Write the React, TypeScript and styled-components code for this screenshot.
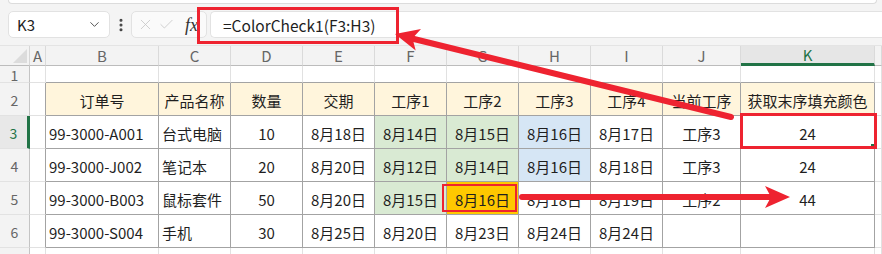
import React from "react";
import styled, { createGlobalStyle } from "styled-components";
import { ChevronDown, EllipsisVertical, X, Check } from "lucide-react";

const GRID = "#e1e1e1";
const DARK = "#a3a3a3";
const GREEN = "#217346";
const RED = "#ee2330";

const GlobalStyle = createGlobalStyle`
  html, body {
    margin: 0;
    padding: 0;
    background: #ffffff;
  }
  body {
    font-family: "Noto Sans CJK SC", "Noto Sans", sans-serif;
    color: #1f1f1f;
  }
`;

type Col = { key: string; w: number };

const COLS: Col[] = [
  { key: "A", w: 16 },
  { key: "B", w: 113 },
  { key: "C", w: 72 },
  { key: "D", w: 72 },
  { key: "E", w: 72 },
  { key: "F", w: 72 },
  { key: "G", w: 72 },
  { key: "H", w: 72 },
  { key: "I", w: 72 },
  { key: "J", w: 78 },
  { key: "K", w: 134 },
];

const FILLS: Record<string, string> = {
  F3: "#d9ead3",
  G3: "#d9ead3",
  H3: "#d6e6f5",
  F4: "#d9ead3",
  G4: "#d9ead3",
  H4: "#d6e6f5",
  F5: "#d9ead3",
  G5: "#ffc800",
};

const HEAD_FILL = "#fff5dc";

// B..K values for rows 2-6
const TABLE: Record<number, string[]> = {
  2: ["订单号", "产品名称", "数量", "交期", "工序1", "工序2", "工序3", "工序4", "当前工序", "获取末序填充颜色"],
  3: ["99-3000-A001", "台式电脑", "10", "8月18日", "8月14日", "8月15日", "8月16日", "8月17日", "工序3", "24"],
  4: ["99-3000-J002", "笔记本", "20", "8月20日", "8月12日", "8月14日", "8月16日", "8月18日", "工序3", "24"],
  5: ["99-3000-B003", "鼠标套件", "50", "8月20日", "8月15日", "8月16日", "8月18日", "8月19日", "工序2", "44"],
  6: ["99-3000-S004", "手机", "30", "8月25日", "8月20日", "8月23日", "8月24日", "8月24日", "", ""],
};

// row 7 only peeks in at the bottom edge, so no label
const ROWS = [
  { n: 1, h: 17, label: "1" },
  { n: 2, h: 33, label: "2" },
  { n: 3, h: 33, label: "3" },
  { n: 4, h: 33, label: "4" },
  { n: 5, h: 33, label: "5" },
  { n: 6, h: 33, label: "6" },
  { n: 7, h: 20, label: "" },
];

const App: React.FC = () => {
  const renderCell = (row: number, col: Col, i: number) => {
    const id = col.key + row;
    const inTable = row >= 2 && row <= 6 && i >= 1;
    const value = inTable ? TABLE[row][i - 1] : "";
    const fill = row === 2 && inTable ? HEAD_FILL : FILLS[id];
    const left = inTable && row > 2 && (col.key === "B" || col.key === "C");
    return (
      <Cell
        key={id}
        $w={col.w}
        $fill={fill}
        $left={left}
        $rightDark={inTable || (col.key === "A" && row >= 2 && row <= 6)}
        $bottomDark={inTable || (row === 1 && i >= 1)}
        $selected={id === "K3"}
      >
        {value}
      </Cell>
    );
  };

  return (
    <Page>
      <GlobalStyle />
      <TopStrip />
      <FormulaBar>
        <NameBox>
          <span>K3</span>
          <ChevronDown size={15} strokeWidth={1.6} color="#555" />
        </NameBox>
        <MoreButton>
          <EllipsisVertical size={16} strokeWidth={2.6} color="#444" />
        </MoreButton>
        <EditBox>
          <X size={17} strokeWidth={1.1} color="#c4c4c4" />
          <Check size={17} strokeWidth={1.1} color="#c4c4c4" />
          <Fx>fx</Fx>
        </EditBox>
        <FormulaInput>=ColorCheck1(F3:H3)</FormulaInput>
      </FormulaBar>

      <Sheet>
        <HeaderRow>
          <Corner />
          {COLS.map((c) => (
            <ColHeader key={c.key} $w={c.w} $active={c.key === "K"}>
              {c.key}
            </ColHeader>
          ))}
          <ColHeader $w={0} $fillRest />
        </HeaderRow>
        {ROWS.map((r) => (
          <Row key={r.n} $h={r.h}>
            <RowHeader $active={r.n === 3}>{r.label}</RowHeader>
            {COLS.map((c, i) => renderCell(r.n, c, i))}
            <Cell $w={0} $fillRest />
          </Row>
        ))}
      </Sheet>

      <Mark $x={197} $y={7} $w={202} $h={37} $b={3} />
      <Mark $x={740} $y={113} $w={137} $h={36} $b={3} />
      <Mark $x={442} $y={184} $w={75} $h={28} $b={2} />

      <Arrows width={882} height={254} viewBox="0 0 882 254">
        <line x1={731} y1={117} x2={414} y2={39} stroke={RED} strokeWidth={6} strokeLinecap="round" />
        <polygon points="395,34 421,29 412.5,38.3 415.7,50.5" fill={RED} />
        <line x1={522} y1={197} x2={772} y2={197} stroke={RED} strokeWidth={6} strokeLinecap="round" />
        <polygon points="790,197 765,186 771,197 765,208" fill={RED} />
      </Arrows>
    </Page>
  );
};

const Page = styled.div`
  position: relative;
  width: 882px;
  height: 254px;
  overflow: hidden;
  background: #f4f4f4;
`;

const TopStrip = styled.div`
  height: 3px;
  margin: 0 5px 0 8px;
  background: #ffffff;
  border: 1px solid #dcdcdc;
  border-top: none;
  border-radius: 0 0 5px 5px;
`;

const FormulaBar = styled.div`
  display: flex;
  align-items: center;
  height: 41px;
  padding: 0 0 0 8px;
  box-sizing: border-box;
`;

const NameBox = styled.div`
  box-sizing: border-box;
  width: 102px;
  height: 27px;
  display: flex;
  align-items: center;
  justify-content: space-between;
  padding: 0 7px 0 8px;
  background: #ffffff;
  border: 1px solid #e2e2e2;
  border-radius: 5px;
  font-size: 15px;
  color: #222;
`;

const MoreButton = styled.div`
  width: 20px;
  display: flex;
  justify-content: center;
  margin-left: 1px;
`;

const EditBox = styled.div`
  box-sizing: border-box;
  width: 76px;
  height: 27px;
  display: flex;
  align-items: center;
  gap: 4px;
  padding-left: 5px;
  background: #fafafa;
  border: 1px solid #e2e2e2;
  border-radius: 5px;
  svg {
    flex: none;
  }
`;

const Fx = styled.span`
  margin-left: 6px;
  font-family: "Liberation Serif", serif;
  font-style: italic;
  font-size: 18px;
  color: #333;
  line-height: 1;
`;

const FormulaInput = styled.div`
  box-sizing: border-box;
  flex: 1;
  height: 27px;
  margin-left: 3px;
  display: flex;
  align-items: center;
  padding-left: 12px;
  background: #ffffff;
  border: 1px solid #e2e2e2;
  border-right: none;
  border-radius: 5px 0 0 5px;
  font-size: 15.5px;
  color: #1f1f1f;
`;

const Sheet = styled.div`
  background: #ffffff;
`;

const HeaderRow = styled.div`
  display: flex;
  height: 20px;
  background: #f3f3f3;
  border-top: 1px solid #e4e4e4;
`;

const Corner = styled.div`
  position: relative;
  box-sizing: border-box;
  width: 30px;
  flex: none;
  border-right: 1px solid #d6d6d6;
  border-bottom: 1px solid #bcbcbc;
  &::after {
    content: "";
    position: absolute;
    right: 2px;
    bottom: 2px;
    border-left: 14px solid transparent;
    border-bottom: 14px solid #dcdcdc;
  }
`;

const ColHeader = styled.div<{ $w: number; $active?: boolean; $fillRest?: boolean }>`
  box-sizing: border-box;
  width: ${(p) => p.$w}px;
  flex: ${(p) => (p.$fillRest ? "1" : "none")};
  display: flex;
  align-items: center;
  justify-content: center;
  font-size: 15px;
  color: ${(p) => (p.$active ? GREEN : "#666")};
  background: ${(p) => (p.$active ? "#e6e6e6" : "transparent")};
  border-right: 1px solid #dadada;
  border-bottom: ${(p) => (p.$active ? `3px solid ${GREEN}` : "1px solid #bcbcbc")};
`;

const Row = styled.div<{ $h: number }>`
  display: flex;
  height: ${(p) => p.$h}px;
`;

const RowHeader = styled.div<{ $active?: boolean }>`
  box-sizing: border-box;
  width: 30px;
  flex: none;
  display: flex;
  align-items: center;
  justify-content: center;
  padding-top: 2px;
  font-size: 14px;
  color: ${(p) => (p.$active ? GREEN : "#666")};
  background: ${(p) => (p.$active ? "#e8e8e8" : "#f3f3f3")};
  border-right: ${(p) => (p.$active ? `3px solid ${GREEN}` : "1px solid #c4c4c4")};
  border-bottom: 1px solid #e2e2e2;
`;

const Cell = styled.div<{
  $w: number;
  $fill?: string;
  $left?: boolean;
  $rightDark?: boolean;
  $bottomDark?: boolean;
  $selected?: boolean;
  $fillRest?: boolean;
}>`
  position: relative;
  box-sizing: border-box;
  width: ${(p) => p.$w}px;
  flex: ${(p) => (p.$fillRest ? "1" : "none")};
  display: flex;
  align-items: center;
  justify-content: ${(p) => (p.$left ? "flex-start" : "center")};
  padding: 3px ${(p) => (p.$left ? "0 0 3px" : "2px 0 2px")};
  background: ${(p) => p.$fill || "#ffffff"};
  border-right: 1px solid ${(p) => (p.$rightDark ? DARK : GRID)};
  border-bottom: 1px solid ${(p) => (p.$bottomDark ? DARK : GRID)};
  font-size: 15px;
  color: #1f1f1f;
  white-space: nowrap;
  overflow: visible;
  ${(p) =>
    p.$selected &&
    `
    &::after {
      content: "";
      position: absolute;
      left: 1px;
      right: 0;
      bottom: 0;
      height: 2px;
      background: ${GREEN};
    }
    &::before {
      content: "";
      position: absolute;
      right: -2px;
      bottom: -1px;
      width: 4px;
      height: 4px;
      background: ${GREEN};
      border: 1px solid #fff;
    }
  `}
`;

const Mark = styled.div<{ $x: number; $y: number; $w: number; $h: number; $b: number }>`
  position: absolute;
  left: ${(p) => p.$x}px;
  top: ${(p) => p.$y}px;
  width: ${(p) => p.$w}px;
  height: ${(p) => p.$h}px;
  box-sizing: border-box;
  border: ${(p) => p.$b}px solid ${RED};
  pointer-events: none;
`;

const Arrows = styled.svg`
  position: absolute;
  left: 0;
  top: 0;
  pointer-events: none;
`;

export default App;
